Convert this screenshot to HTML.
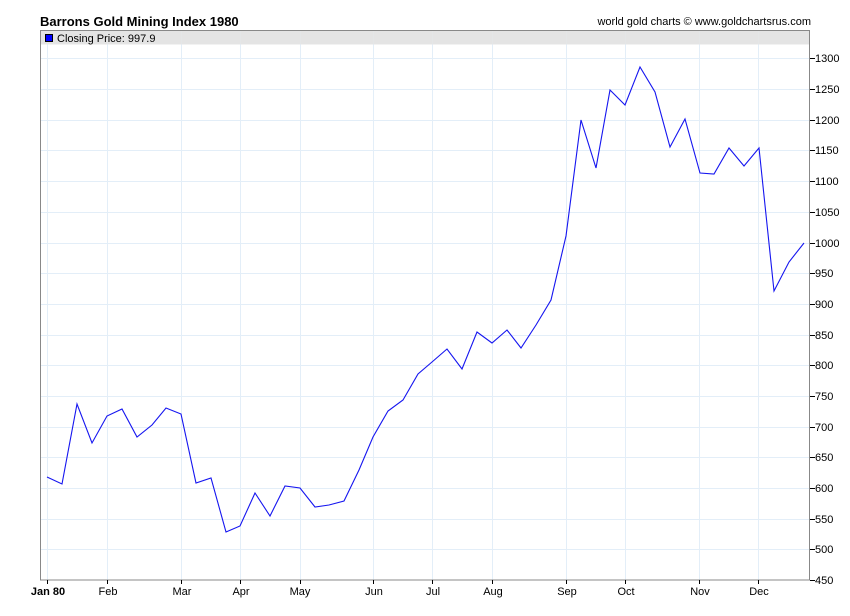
<!DOCTYPE html>
<html><head><meta charset="utf-8"><style>
html,body{margin:0;padding:0;background:#fff;width:850px;height:616px;overflow:hidden}
svg{display:block}
text{font-family:"Liberation Sans",Arial,sans-serif}
</style></head><body>
<svg width="850" height="616" viewBox="0 0 850 616" xmlns="http://www.w3.org/2000/svg">
<text x="40" y="26" font-size="13" font-weight="bold" fill="#000">Barrons Gold Mining Index 1980</text>
<text x="811" y="25" font-size="11" fill="#000" text-anchor="end">world gold charts © www.goldchartsrus.com</text>
<rect x="40.5" y="30.5" width="769" height="14" fill="#e4e4e4"/>
<g stroke="#e3eef8" stroke-width="1">
<line x1="47.5" y1="30" x2="47.5" y2="580"/><line x1="107.5" y1="30" x2="107.5" y2="580"/><line x1="181.5" y1="30" x2="181.5" y2="580"/><line x1="240.5" y1="30" x2="240.5" y2="580"/><line x1="300.5" y1="30" x2="300.5" y2="580"/><line x1="373.5" y1="30" x2="373.5" y2="580"/><line x1="432.5" y1="30" x2="432.5" y2="580"/><line x1="492.5" y1="30" x2="492.5" y2="580"/><line x1="566.5" y1="30" x2="566.5" y2="580"/><line x1="625.5" y1="30" x2="625.5" y2="580"/><line x1="699.5" y1="30" x2="699.5" y2="580"/><line x1="758.5" y1="30" x2="758.5" y2="580"/>
</g>
<g stroke="#e3eef8" stroke-width="1" id="hg"></g>
<rect x="40.5" y="30.5" width="769" height="14" fill="#e4e4e4" opacity="0.85"/>
<g stroke="#e3eef8">
<line x1="40" y1="58.5" x2="810" y2="58.5"/><line x1="40" y1="89.5" x2="810" y2="89.5"/><line x1="40" y1="120.5" x2="810" y2="120.5"/><line x1="40" y1="150.5" x2="810" y2="150.5"/><line x1="40" y1="181.5" x2="810" y2="181.5"/><line x1="40" y1="212.5" x2="810" y2="212.5"/><line x1="40" y1="243.5" x2="810" y2="243.5"/><line x1="40" y1="273.5" x2="810" y2="273.5"/><line x1="40" y1="304.5" x2="810" y2="304.5"/><line x1="40" y1="335.5" x2="810" y2="335.5"/><line x1="40" y1="365.5" x2="810" y2="365.5"/><line x1="40" y1="396.5" x2="810" y2="396.5"/><line x1="40" y1="427.5" x2="810" y2="427.5"/><line x1="40" y1="457.5" x2="810" y2="457.5"/><line x1="40" y1="488.5" x2="810" y2="488.5"/><line x1="40" y1="519.5" x2="810" y2="519.5"/><line x1="40" y1="549.5" x2="810" y2="549.5"/>
</g>
<rect x="40.5" y="30.5" width="769" height="549.5" fill="none" stroke="#888" stroke-width="1"/>
<rect x="45.5" y="34.5" width="7" height="7" fill="#0000ff" stroke="#000" stroke-width="1"/>
<text x="57" y="42" font-size="11" fill="#000">Closing Price: 997.9</text>
<polyline fill="none" stroke="#1515f0" stroke-width="1.1" points="47,477 62,484 77,404 92,443 107,416 122,409 137,437 152,425 166,408 181,414 196,483 211,478 226,532 240,526 255,493 270,516 285,486 300,488 315,507 329,505 344,501 359,470 373,437 388,411 403,400 418,374 432,362 447,349 462,369 477,332 492,343 507,330 521,348 536,325 551,300 566,236 581,120 596,168 610,90 625,105 640,67 655,92 670,147 685,119 700,173 714,174 729,148 744,166 759,148 774,291 789,262 804,243"/>
<g stroke="#000" stroke-width="1">
<line x1="810" y1="58.5" x2="815" y2="58.5"/><line x1="810" y1="89.5" x2="815" y2="89.5"/><line x1="810" y1="120.5" x2="815" y2="120.5"/><line x1="810" y1="150.5" x2="815" y2="150.5"/><line x1="810" y1="181.5" x2="815" y2="181.5"/><line x1="810" y1="212.5" x2="815" y2="212.5"/><line x1="810" y1="243.5" x2="815" y2="243.5"/><line x1="810" y1="273.5" x2="815" y2="273.5"/><line x1="810" y1="304.5" x2="815" y2="304.5"/><line x1="810" y1="335.5" x2="815" y2="335.5"/><line x1="810" y1="365.5" x2="815" y2="365.5"/><line x1="810" y1="396.5" x2="815" y2="396.5"/><line x1="810" y1="427.5" x2="815" y2="427.5"/><line x1="810" y1="457.5" x2="815" y2="457.5"/><line x1="810" y1="488.5" x2="815" y2="488.5"/><line x1="810" y1="519.5" x2="815" y2="519.5"/><line x1="810" y1="549.5" x2="815" y2="549.5"/><line x1="810" y1="580.5" x2="815" y2="580.5"/>
<line x1="47.5" y1="580" x2="47.5" y2="584"/><line x1="107.5" y1="580" x2="107.5" y2="584"/><line x1="181.5" y1="580" x2="181.5" y2="584"/><line x1="240.5" y1="580" x2="240.5" y2="584"/><line x1="300.5" y1="580" x2="300.5" y2="584"/><line x1="373.5" y1="580" x2="373.5" y2="584"/><line x1="432.5" y1="580" x2="432.5" y2="584"/><line x1="492.5" y1="580" x2="492.5" y2="584"/><line x1="566.5" y1="580" x2="566.5" y2="584"/><line x1="625.5" y1="580" x2="625.5" y2="584"/><line x1="699.5" y1="580" x2="699.5" y2="584"/><line x1="758.5" y1="580" x2="758.5" y2="584"/>
</g>
<g font-size="11" fill="#000">
<text x="815" y="62">1300</text><text x="815" y="93">1250</text><text x="815" y="124">1200</text><text x="815" y="154">1150</text><text x="815" y="185">1100</text><text x="815" y="216">1050</text><text x="815" y="247">1000</text><text x="815" y="277">950</text><text x="815" y="308">900</text><text x="815" y="339">850</text><text x="815" y="369">800</text><text x="815" y="400">750</text><text x="815" y="431">700</text><text x="815" y="461">650</text><text x="815" y="492">600</text><text x="815" y="523">550</text><text x="815" y="553">500</text><text x="815" y="584">450</text>
</g>
<g font-size="11" fill="#000" text-anchor="middle">
<text x="48" y="595" font-weight="bold">Jan 80</text><text x="108" y="595">Feb</text><text x="182" y="595">Mar</text><text x="241" y="595">Apr</text><text x="300" y="595">May</text><text x="374" y="595">Jun</text><text x="433" y="595">Jul</text><text x="493" y="595">Aug</text><text x="567" y="595">Sep</text><text x="626" y="595">Oct</text><text x="700" y="595">Nov</text><text x="759" y="595">Dec</text>
</g>
</svg>
</body></html>
